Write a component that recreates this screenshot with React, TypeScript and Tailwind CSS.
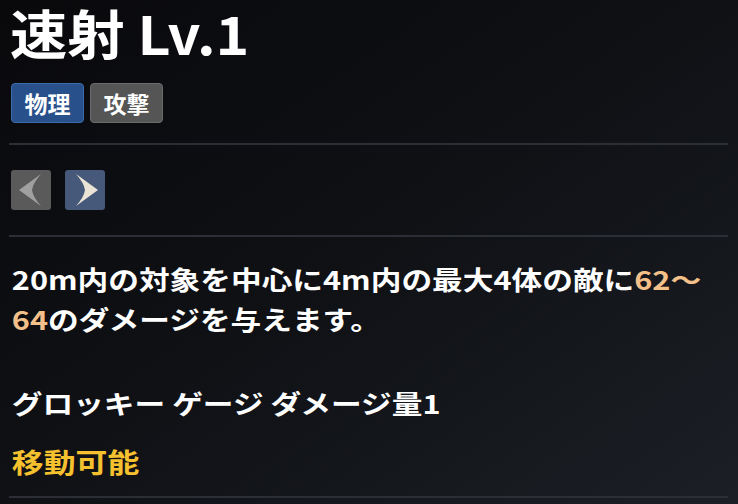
import React from 'react';

const font = { fontFamily: '"Noto Sans CJK JP", "Noto Sans", sans-serif' };

const Arrow: React.FC<{ dir: 'left' | 'right' }> = ({ dir }) => {
  const left = dir === 'left';
  return (
    <button
      className={`w-10 h-10 rounded-[3px] flex items-center justify-center ${left ? 'bg-[#5a5a5a]' : 'bg-[#46597a]'}`}
    >
      <svg width="40" height="40" viewBox="0 0 40 40">
        {left ? (
          <path d="M8 20 L30 4 Q22 13 21 20 Q22 27 30 36 Z" fill="#a0a0a0" />
        ) : (
          <path d="M33 20 L11 4 Q19 13 20 20 Q19 27 11 36 Z" fill="#ebe4d6" />
        )}
      </svg>
    </button>
  );
};

const Divider = () => <div className="h-[2px] bg-[#2b2e34] mr-[10px] ml-[9px]" />;

export default function App() {
  return (
    <div
      className="w-[738px] h-[504px] overflow-hidden bg-gradient-to-br from-[#09090c] via-[#0f1115] to-[#1c1f25] text-white"
      style={font}
    >
      <div className="pl-[10px]">
        <div className="w-[300px] h-[64px] flex items-center">
          <h1 className="text-[53px] font-bold leading-[64px] origin-left scale-x-[1.08] whitespace-nowrap">速射 Lv.1</h1>
        </div>
        <div className="flex gap-[6px] mt-[19px] ml-[1px]">
          <span className="w-[73px] h-[40px] flex items-center justify-center rounded-[4px] bg-[#28508a] border border-[#3d6bab] text-[23px] font-bold">
            物理
          </span>
          <span className="w-[73px] h-[40px] flex items-center justify-center rounded-[4px] bg-[#555555] border border-[#6b6b6b] text-[23px] font-bold">
            攻撃
          </span>
        </div>
      </div>
      <div className="mt-[20px]">
        <Divider />
      </div>
      <div className="flex gap-[14px] pl-[11px] mt-[25px]">
        <Arrow dir="left" />
        <Arrow dir="right" />
      </div>
      <div className="mt-[25px]">
        <Divider />
      </div>
      <div className="pl-[10px] pt-[22px] text-[26px] font-bold leading-[40px] origin-left scale-x-[1.18] whitespace-nowrap">
        <p>
          20m内の対象を中心に4m内の最大4体の敵に<span className="text-[#f4c08a]">62〜</span>
          <br />
          <span className="text-[#f4c08a]">64</span>のダメージを与えます。
        </p>
        <p className="mt-[44px]">グロッキー ゲージ ダメージ量1</p>
        <p className="mt-[19px] text-[27px] text-[#f5c12e]">移動可能</p>
      </div>
      <div className="mt-[14px]">
        <Divider />
      </div>
    </div>
  );
}
